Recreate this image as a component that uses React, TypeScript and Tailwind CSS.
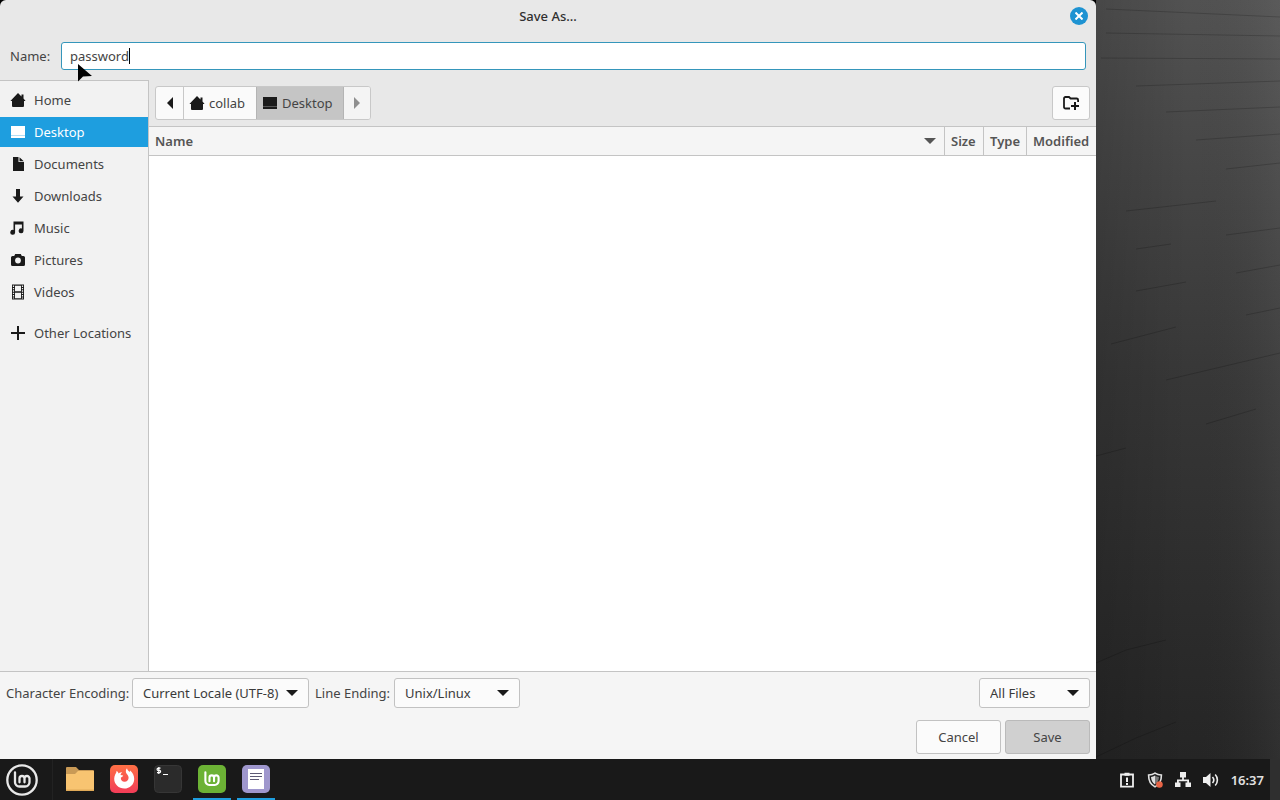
import { useState } from 'react'
import type { ReactNode } from 'react'

const HomeIcon = () => (
  <svg className="size-4 shrink-0" viewBox="0 0 16 16" fill="currentColor">
    <path d="M8 1 .4 9H2v5a1 1 0 0 0 1 1h10a1 1 0 0 0 1-1V9h1.600L13.500 6.600V2.600h-2v2z" />
  </svg>
)

const DesktopIcon = () => (
  <svg className="size-4 shrink-0" viewBox="0 0 16 16" fill="currentColor">
    <path d="M1 2h14v9.500H1z" />
    <path d="M1 11.500h14V12H1z" opacity=".6" />
    <path d="M1 12h14v2H1z" />
  </svg>
)

const DocumentIcon = () => (
  <svg className="size-4 shrink-0" viewBox="0 0 16 16" fill="currentColor">
    <path d="M3 1h5.500v5H14v9H3zM9.500 1.200 13.800 5.200H9.500z" />
  </svg>
)

const DownloadIcon = () => (
  <svg className="size-4 shrink-0" viewBox="0 0 16 16" fill="currentColor">
    <path d="M6 1h4v7.500h3.500L8 14.800 2.500 8.500H6z" />
  </svg>
)

const MusicIcon = () => (
  <svg className="size-4 shrink-0" viewBox="0 0 16 16" fill="currentColor">
    <path d="M3.500 1.500h10v9.300a2.400 2.400 0 1 1-1.600-2.200V4.500H5.100v7.800a2.400 2.400 0 1 1-1.600-2.200z" />
  </svg>
)

const CameraIcon = () => (
  <svg className="size-4 shrink-0" viewBox="0 0 16 16" fill="currentColor">
    <path d="M5.200 2h5.600l1 2h1.700A1.500 1.500 0 0 1 15 5.500v7a1.500 1.500 0 0 1-1.500 1.500h-11A1.500 1.500 0 0 1 1 12.500v-7A1.500 1.500 0 0 1 2.500 4h1.700z" />
    <circle cx="8" cy="8.500" r="2.900" fill="#f2f2f2" />
  </svg>
)

const VideoIcon = () => (
  <svg className="size-4 shrink-0" viewBox="0 0 16 16">
    <path d="M2 .5h12v15H2z" fill="currentColor" />
    <path d="M5 1.800h6v5.400H5zM5 8.800h6v5.400H5z" fill="#f2f2f2" />
    <path d="M3.500 1.500v13M12.500 1.500v13" stroke="#f2f2f2" strokeWidth="1.200" strokeDasharray="1.400 1" />
  </svg>
)

const PlusIcon = () => (
  <svg className="size-4 shrink-0" viewBox="0 0 16 16" stroke="currentColor" strokeWidth="2">
    <path d="M8 1v14M1 8h14" />
  </svg>
)

const NewFolderIcon = () => (
  <svg className="size-[18px]" viewBox="0 0 18 18" fill="none" stroke="currentColor" strokeWidth="1.800">
    <path d="M8 14.500H3.500A1.500 1.500 0 0 1 2 13V4.500A1.500 1.500 0 0 1 3.500 3H7l1.600 1.500h6A1.500 1.500 0 0 1 16.100 6v2" />
    <path d="M13 8v8M9 12h8" strokeWidth="2" />
  </svg>
)

const Triangle = ({ className }: { className: string }) => (
  <svg className={className} viewBox="0 0 12 6" fill="currentColor">
    <path d="M0 0h12L6 6z" />
  </svg>
)

const MintLetters = () => (
  <path
    d="M9 8.500v9.700a4.300 4.300 0 0 0 4.300 4.300h5.900a4.300 4.300 0 0 0 4.300-4.300v-3.700a2.500 2.500 0 0 0-5 0v3.800M18.500 14.500a2.500 2.500 0 0 0-5 0v3.800"
    fill="none"
    stroke="#fff"
    strokeWidth="2.300"
    strokeLinecap="round"
  />
)

const MenuIcon = () => (
  <svg className="size-8" viewBox="0 0 32 32" opacity=".9">
    <circle cx="16" cy="16" r="14.700" fill="none" stroke="#fff" strokeWidth="2.300" />
    <MintLetters />
  </svg>
)

const FilesIcon = () => (
  <svg className="size-8" viewBox="0 0 32 32">
    <path d="M2 4a1 1 0 0 1 1-1h9l3 3h14a1 1 0 0 1 1 1v6H2z" fill="#c99a56" />
    <path d="M2 10h9l3-3h16v19a1 1 0 0 1-1 1H3a1 1 0 0 1-1-1z" fill="#f8c471" />
    <path d="M2 25.500h28V27H2z" fill="#e0aa58" />
  </svg>
)

const FirefoxIcon = () => (
  <svg className="size-8" viewBox="0 0 32 32">
    <defs>
      <linearGradient id="fox" x1="0" y1="0" x2="0" y2="1">
        <stop offset="0" stopColor="#ff7045" />
        <stop offset="1" stopColor="#f23c58" />
      </linearGradient>
    </defs>
    <rect x="2" y="1" width="28" height="28" rx="5" fill="url(#fox)" />
    <path
      d="M7.200 10.500C8 9.500 8.500 8 8.600 6.800c1 .7 1.700 1.600 2.100 2.600 1-.8 2.300-1.100 3.600-1.100-1 .7-1.700 1.800-1.700 2.600l2.600.5c-.3 1-1.500 1.600-2.300 2.100-.4 2.300 1.200 4.300 3.700 4.300 2.400 0 4-1.700 4-4 0-2.400-1.700-3.500-2.400-4.800-.7-1.400-.3-3.500.8-4.800.3 2 1.600 2.600 2.800 3.900l.3-1.500c2.700 2 4.100 5 4.100 8.300 0 5.500-4.400 9.600-9.900 9.600S6.200 20.300 6.200 15c0-1.600.3-3.200 1-4.500z"
      fill="#fff"
    />
  </svg>
)

const TerminalIcon = () => (
  <svg className="size-8" viewBox="0 0 32 32">
    <rect x="2.500" y="1.500" width="27" height="27" rx="4" fill="#2b2b2b" stroke="#363636" />
    <path
      d="M8.500 4.200H6.200a1 1 0 0 0 0 2.200h1.300a1 1 0 0 1 0 2.200H5M6.800 3v7M11 10.500h5"
      fill="none"
      stroke="#fff"
      strokeWidth="1.200"
    />
  </svg>
)

const MintAppIcon = () => (
  <svg className="size-8" viewBox="0 0 32 32">
    <rect x="2" y="1" width="28" height="28" rx="5" fill="#6cb235" />
    <g transform="translate(1.200 .5) scale(.91)">
      <MintLetters />
    </g>
  </svg>
)

const EditorIcon = () => (
  <svg className="size-8" viewBox="0 0 32 32">
    <rect x="2" y="1" width="28" height="28" rx="5" fill="#9f97cd" />
    <path d="M8 5h16v20H8z" fill="#fff" />
    <path d="M10 9.500h12M10 12.500h12M10 15.500h9" stroke="#5d5a75" strokeWidth="1.200" />
  </svg>
)

const ReportIcon = () => (
  <svg className="size-4" viewBox="0 0 16 16">
    <path d="M2 2.500h12v12.200H2z" fill="none" stroke="#eee" strokeWidth="1.800" />
    <path d="M5.500.8h5v3h-5zM7 5.500h2v4.500H7zM7 11h2v2H7z" fill="#eee" />
  </svg>
)

const ShieldIcon = () => (
  <svg className="size-4" viewBox="0 0 18 18">
    <path
      d="M9 1.200c2.200 1.500 4.500 2.100 7.200 2.200.1 6.200-2 10.700-7.200 13.300C3.800 14.100 1.700 9.600 1.800 3.400 4.500 3.300 6.800 2.700 9 1.200z"
      fill="none"
      stroke="#e0e0e0"
      strokeWidth="1.800"
    />
    <path d="M9 4v10C6 12.200 4.700 9.500 4.500 5.700 6.200 5.500 7.600 5 9 4z" fill="#e0e0e0" />
    <path d="M9 4v10c3-1.800 4.300-4.500 4.500-8.300C11.800 5.500 10.400 5 9 4z" fill="#777" />
    <circle cx="14" cy="14" r="3.700" fill="#e86446" />
  </svg>
)

const NetworkIcon = () => (
  <svg className="size-4" viewBox="0 0 16 16" fill="#eee">
    <path d="M5 0h6v5.500H8.900v2H14v3h2V15h-5.500v-4.500h1.700V9.300H3.800v1.200h1.700V15H0v-4.500h2v-3h5.100v-2H5z" />
  </svg>
)

const VolumeIcon = () => (
  <svg className="size-4" viewBox="0 0 16 16" fill="none" stroke="#eee" strokeWidth="1.600">
    <path d="M0 5h3l4.500-4v14L3 11H0z" fill="#eee" stroke="none" />
    <path d="M9.500 5a4.500 4.500 0 0 1 0 6" />
    <path d="M12.200 2.500a8 8 0 0 1 0 11" />
  </svg>
)

const places: { name: string; icon: ReactNode }[] = [
  { name: 'Home', icon: <HomeIcon /> },
  { name: 'Desktop', icon: <DesktopIcon /> },
  { name: 'Documents', icon: <DocumentIcon /> },
  { name: 'Downloads', icon: <DownloadIcon /> },
  { name: 'Music', icon: <MusicIcon /> },
  { name: 'Pictures', icon: <CameraIcon /> },
  { name: 'Videos', icon: <VideoIcon /> },
]

const Place = ({ name, icon, active }: { name: string; icon: ReactNode; active?: boolean }) => (
  <button
    className={
      active
        ? 'flex h-[30px] w-full items-center gap-2 bg-[#1e9edf] px-2.5 text-left text-white'
        : 'flex h-[30px] w-full items-center gap-2 px-2.5 text-left'
    }
  >
    <span className={active ? 'text-white' : 'text-[#1a1a1a]'}>{icon}</span>
    {name}
  </button>
)

type DropdownProps = { id: string; label?: string; options: string[]; className: string }

const Dropdown = ({ id, label, options, className }: DropdownProps) => (
  <div className={`relative ${className}`}>
    <select
      id={id}
      aria-label={label}
      className="h-[30px] w-full appearance-none rounded-[3px] border border-[#c2c2c2] bg-[#fbfbfb] pr-7 pl-2.5 text-[#3a3a3a]"
    >
      {options.map((option) => (
        <option key={option}>{option}</option>
      ))}
    </select>
    <Triangle className="pointer-events-none absolute top-3 right-[11px] h-1.5 w-3 text-[#1a1a1a]" />
  </div>
)

// plank seams of the wallpaper: x1, y1, x2, y2
const seams = [
  [10, 9, 184, 17],
  [10, 33, 184, 36],
  [5, 58, 184, 59],
  [40, 86, 184, 81],
  [70, 112, 184, 107],
  [100, 140, 184, 134],
  [130, 169, 184, 163],
  [30, 211, 120, 201],
  [130, 235, 184, 228],
  [40, 249, 75, 244],
  [40, 291, 90, 282],
  [140, 273, 184, 265],
  [15, 344, 80, 327],
  [150, 315, 184, 308],
  [70, 380, 184, 353],
  [110, 424, 160, 409],
]

const Wallpaper = () => (
  <div className="relative w-[184px] shrink-0 bg-linear-to-b from-[#525252] via-[#373737] to-[#252525]">
    <svg className="absolute inset-0 size-full" viewBox="0 0 184 759" preserveAspectRatio="none">
      <defs>
        <linearGradient id="shade" x1="0" y1="0" x2="1" y2="0">
          <stop offset="0" stopColor="#000" stopOpacity=".13" />
          <stop offset=".5" stopColor="#000" stopOpacity="0" />
          <stop offset="1" stopColor="#fff" stopOpacity=".05" />
        </linearGradient>
      </defs>
      <rect width="184" height="759" fill="url(#shade)" />
      {seams.map(([x1, y1, x2, y2]) => (
        <line key={y1} x1={x1} y1={y1} x2={x2} y2={y2} stroke="#000" strokeOpacity=".18" />
      ))}
      <path
        d="M0 456 30 448M0 663 30 650 70 640M0 519 0 519M0 757 40 738 80 722"
        stroke="#000"
        strokeOpacity=".18"
        fill="none"
      />
    </svg>
  </div>
)

const Task = ({ label, icon, running }: { label: string; icon: ReactNode; running?: boolean }) => (
  <button
    aria-label={label}
    className={
      running
        ? 'flex w-[38px] items-center justify-center border-b-2 border-[#1e9edf] pt-0.5'
        : 'flex w-[38px] items-center justify-center border-b-2 border-transparent pt-0.5'
    }
  >
    {icon}
  </button>
)

const Taskbar = () => (
  <footer className="flex h-[41px] shrink-0 bg-[#191919]">
    <button aria-label="Menu" className="flex w-[53px] items-center border-r border-[#222] pt-px pl-1.5">
      <MenuIcon />
    </button>
    <div className="flex flex-1 gap-1.5 pl-2">
      <Task label="Files" icon={<FilesIcon />} />
      <Task label="Firefox" icon={<FirefoxIcon />} />
      <Task label="Terminal" icon={<TerminalIcon />} />
      <Task label="Welcome" icon={<MintAppIcon />} running />
      <Task label="Text Editor" icon={<EditorIcon />} running />
    </div>
    <div className="flex items-center gap-3 pt-px pr-1.5">
      <ReportIcon />
      <ShieldIcon />
      <NetworkIcon />
      <VolumeIcon />
      <time className="text-[13px] font-semibold text-[#e0e0e0]">16:37</time>
    </div>
    <button aria-label="Show desktop" className="w-2.5 bg-[#2f2f2f]" />
  </footer>
)

const SaveDialog = () => {
  const [name, setName] = useState('password')

  return (
    <div className="relative flex min-w-0 flex-1 flex-col overflow-hidden rounded-t-md bg-[#e8e8e8]">
      <div className="flex h-8 items-center pr-2 pl-[26px]">
        <h1 className="flex-1 text-center font-medium text-[#303030]">Save As…</h1>
        <button aria-label="Close" className="flex size-[18px] items-center justify-center rounded-full bg-[#1e93d2]">
          <svg className="size-2" viewBox="0 0 8 8" stroke="#fff" strokeWidth="2">
            <path d="M.5.5l7 7M7.500.5l-7 7" />
          </svg>
        </button>
      </div>

      <div className="flex items-center px-2.5 py-2.5">
        <label htmlFor="filename" className="w-[51px]">
          Name:
        </label>
        <div className="relative flex-1">
          <input
            id="filename"
            value={name}
            onChange={(e) => setName(e.target.value)}
            className="block h-7 w-full rounded-[3px] border border-[#3596bb] bg-white px-2 outline-none"
          />
          <span className="absolute top-1.5 left-[68px] h-4 w-px bg-black" />
        </div>
      </div>

      <div className="flex flex-1">
        <nav className="w-[149px] shrink-0 border-t border-r border-[#c4c4c4] bg-[#f2f2f2] pt-1">
          <div className="flex flex-col gap-0.5">
            {places.map((place) => (
              <Place key={place.name} {...place} active={place.name === 'Desktop'} />
            ))}
          </div>
          <div className="pt-[11px]">
            <Place name="Other Locations" icon={<PlusIcon />} />
          </div>
        </nav>

        <div className="flex min-w-0 flex-1 flex-col">
          <div className="flex justify-between px-1.5 py-1.5">
            <div className="flex h-[34px] overflow-hidden rounded-[3px] border border-[#c8c8c8] bg-[#fafafa]">
              <button aria-label="Back" className="flex w-7 items-center justify-center border-r border-[#c8c8c8]">
                <svg className="h-3 w-1.5 text-[#1a1a1a]" viewBox="0 0 6 12" fill="currentColor">
                  <path d="M6 0v12L0 6z" />
                </svg>
              </button>
              <button className="flex w-[72px] items-center gap-1 pl-[5px]">
                <span className="text-[#1a1a1a]">
                  <HomeIcon />
                </span>
                collab
              </button>
              <button className="flex w-[88px] items-center gap-1 border-x border-[#b4b4b4] bg-[#c5c5c5] pl-[5px]">
                <span className="text-[#1a1a1a]">
                  <DesktopIcon />
                </span>
                Desktop
              </button>
              <button aria-label="Forward" className="flex w-[26px] items-center justify-center bg-[#f4f4f4]">
                <svg className="h-3 w-1.5 text-[#8f8f8f]" viewBox="0 0 6 12" fill="currentColor">
                  <path d="M0 0v12l6-6z" />
                </svg>
              </button>
            </div>
            <button
              aria-label="Create Folder"
              className="flex h-[34px] w-[38px] items-center justify-center rounded-[3px] border border-[#c8c8c8] bg-[#fbfbfb] text-[#1a1a1a]"
            >
              <NewFolderIcon />
            </button>
          </div>

          <div className="flex-1 bg-white">
            <table className="w-full table-fixed border-separate border-spacing-0 text-left">
              <thead>
                <tr className="h-[30px] bg-[#f5f5f5] text-[#555]">
                  <th className="border-y border-[#c4c4c4] px-1.5 font-semibold">
                    <div className="flex items-center justify-between pr-0.5">
                      Name
                      <Triangle className="h-1.5 w-3" />
                    </div>
                  </th>
                  <th className="w-[39px] border-y border-l border-[#c4c4c4] pl-1.5 font-semibold">Size</th>
                  <th className="w-[43px] border-y border-l border-[#c4c4c4] pl-1.5 font-semibold">Type</th>
                  <th className="w-[70px] border-y border-l border-[#c4c4c4] pl-1.5 font-semibold">Modified</th>
                </tr>
              </thead>
              <tbody />
            </table>
          </div>
        </div>
      </div>

      <div className="flex flex-col gap-3 border-t border-[#c4c4c4] bg-[#f5f5f5] px-1.5 pt-1.5 pb-[5px]">
        <div className="flex items-center">
          <label htmlFor="encoding" className="w-[126px] whitespace-nowrap">
            Character Encoding:
          </label>
          <Dropdown id="encoding" options={['Current Locale (UTF-8)']} className="w-[177px]" />
          <label htmlFor="line-ending" className="w-[85px] pl-1.5 whitespace-nowrap">
            Line Ending:
          </label>
          <Dropdown id="line-ending" options={['Unix/Linux']} className="w-[126px]" />
          <Dropdown id="file-type" label="File type" options={['All Files']} className="ml-auto w-[111px]" />
        </div>
        <div className="flex justify-end gap-1">
          <button className="h-[34px] w-[85px] rounded-[3px] border border-[#c2c2c2] bg-[#fbfbfb]">Cancel</button>
          <button className="h-[34px] w-[85px] rounded-[3px] border border-[#bababa] bg-[#d0d0d0]">Save</button>
        </div>
      </div>

      {/* mouse pointer */}
      <svg className="pointer-events-none absolute top-[63px] left-[77px] h-5 w-4" viewBox="0 0 16 20">
        <path d="M1 1v17.500L6 13.500l9-.5z" fill="#000" />
      </svg>
    </div>
  )
}

export default function App() {
  return (
    <div className="flex min-h-screen flex-col bg-black font-['Noto_Sans','Open_Sans',sans-serif] text-[13px] leading-4 text-[#444]">
      <main className="flex flex-1">
        <SaveDialog />
        <Wallpaper />
      </main>
      <Taskbar />
    </div>
  )
}
